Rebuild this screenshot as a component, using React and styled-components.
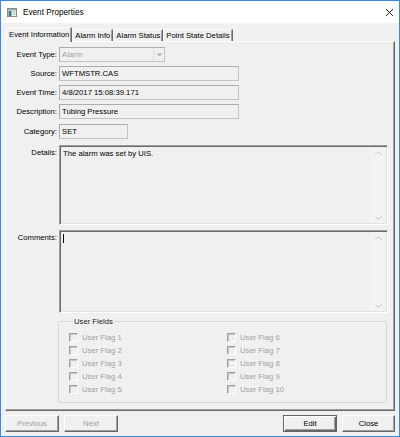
import React from 'react'
import styled, { createGlobalStyle } from 'styled-components'

const GlobalStyle = createGlobalStyle`
  html, body {
    margin: 0;
    padding: 0;
    background: #ffffff;
  }
  * {
    box-sizing: border-box;
  }
`

const Window = styled.div`
  width: 400px;
  height: 437px;
  border: 1px solid #3c8ad8;
  display: flex;
  flex-direction: column;
  font-family: 'Liberation Sans', Arial, sans-serif;
  font-size: 7.7px;
  color: #000;
  overflow: hidden;
`

const TitleBar = styled.div`
  height: 22px;
  flex: none;
  background: #ffffff;
  display: flex;
  align-items: center;
  padding: 0 5px 0 6px;
`

const TitleText = styled.span`
  font-family: 'Liberation Sans', Arial, sans-serif;
  font-size: 8.2px;
  margin-left: 6px;
  flex: 1;
  color: #000;
`

const Body = styled.div`
  flex: 1;
  background: #f0f0f0;
  display: flex;
  flex-direction: column;
  padding: 4px 4px 4px 4px;
`

const TabStrip = styled.div`
  height: 14px;
  display: flex;
  align-items: flex-end;
  padding-left: 1px;
  position: relative;
  z-index: 1;
`

const Tab = styled.div`
  height: ${({ active }) => (active ? '15px' : '12px')};
  margin-bottom: ${({ active }) => (active ? '-1px' : '0')};
  padding: 0 2px 0 2px;
  display: flex;
  align-items: center;
  background: #f0f0f0;
  border-top: 1px solid #ffffff;
  border-left: 1px solid #ffffff;
  border-right: 1px solid #696969;
  box-shadow: inset -1px 0 0 #a0a0a0;
  white-space: nowrap;
  line-height: 1;
`

const Panel = styled.div`
  flex: 1;
  border-top: 1px solid #ffffff;
  border-left: 1px solid #ffffff;
  border-right: 1px solid #696969;
  border-bottom: 1px solid #696969;
  box-shadow: inset -1px -1px 0 #a0a0a0;
  padding: 5px 0 0 1px;
  display: flex;
  flex-direction: column;
`

const Field = styled.div`
  display: flex;
  align-items: ${({ top }) => (top ? 'flex-start' : 'center')};
  margin-top: ${({ gap }) => gap}px;
`

const Label = styled.div`
  width: 50px;
  margin-right: 2px;
  text-align: right;
  white-space: nowrap;
  padding-top: ${({ top }) => (top ? '3px' : '0')};
`

const TextBox = styled.div`
  width: ${({ w }) => w}px;
  height: 15px;
  background: #f0f0f0;
  border: 1px solid #c4c4c4;
  border-top-color: #adadad;
  border-left-color: #adadad;
  padding: 0 2px;
  display: flex;
  align-items: center;
  white-space: nowrap;
  color: ${({ disabled }) => (disabled ? '#a0a0a0' : '#000')};
`

const Combo = styled(TextBox)`
  padding-right: 0;
  justify-content: space-between;
`

const ComboArrow = styled.div`
  width: 11px;
  height: 13px;
  display: flex;
  align-items: center;
  justify-content: center;
  border-left: 1px solid #e3e3e3;
`

const TextArea = styled.div`
  width: 329px;
  height: ${({ h }) => h}px;
  background: #f0f0f0;
  border-top: 1px solid #a0a0a0;
  border-left: 1px solid #a0a0a0;
  border-right: 1px solid #ffffff;
  border-bottom: 1px solid #ffffff;
  box-shadow: inset 1px 1px 0 #696969, inset -1px -1px 0 #e3e3e3;
  display: flex;
`

const AreaText = styled.div`
  flex: 1;
  padding: 3px 2px 0 3px;
  white-space: nowrap;
`

const Caret = styled.div`
  width: 1px;
  height: 9px;
  background: #000;
`

const ScrollBar = styled.div`
  width: 14px;
  margin: 2px 2px 1px 0;
  background: #f3f3f3;
  display: flex;
  flex-direction: column;
  justify-content: space-between;
  align-items: center;
  padding: 3px 0;
`

const GroupBox = styled.fieldset`
  margin: 4px 0 0 -1px;
  width: 329px;
  height: 86px;
  border: 1px solid #d9d9d9;
  border-radius: 2px;
  padding: 5px 0 0 10px;
`

const Legend = styled.legend`
  margin-left: 4px;
  padding: 0 1px;
  font-family: 'Liberation Sans', Arial, sans-serif;
  font-weight: 400;
  font-size: 7.7px;
  line-height: 9px;
  color: #1a1a1a;
`

const FlagGrid = styled.div`
  display: grid;
  grid-template-columns: 158px 1fr;
  grid-auto-flow: column;
  grid-template-rows: repeat(5, 13px);
`

const Flag = styled.div`
  display: flex;
  align-items: center;
  color: #a0a0a0;
  white-space: nowrap;
`

const Box = styled.div`
  width: 9px;
  height: 9px;
  margin-right: 4px;
  border-top: 1px solid #a0a0a0;
  border-left: 1px solid #a0a0a0;
  border-right: 1px solid #ffffff;
  border-bottom: 1px solid #ffffff;
  box-shadow: inset 1px 1px 0 #c8c8c8;
  background: #f0f0f0;
`

const Footer = styled.div`
  height: 17px;
  margin-top: 4px;
  display: flex;
  gap: 5px;
`

const Spacer = styled.div`
  flex: 1;
`

const Button = styled.div`
  width: ${({ w }) => w || 54}px;
  height: 17px;
  display: flex;
  align-items: center;
  justify-content: center;
  background: #f0f0f0;
  color: ${({ disabled }) => (disabled ? '#a0a0a0' : '#000')};
  border-top: 1px solid ${({ focused }) => (focused ? '#646464' : '#ffffff')};
  border-left: 1px solid ${({ focused }) => (focused ? '#646464' : '#ffffff')};
  border-right: 1px solid ${({ focused }) => (focused ? '#646464' : '#696969')};
  border-bottom: 1px solid ${({ focused }) => (focused ? '#646464' : '#696969')};
  box-shadow: ${({ focused }) =>
    focused
      ? 'inset 1px 1px 0 #ffffff, inset -1px -1px 0 #696969, inset -2px -2px 0 #a0a0a0'
      : 'inset -1px -1px 0 #a0a0a0'};
`

const AppIcon = () => (
  <svg width="10" height="9" viewBox="0 0 10 9">
    <rect x="0.5" y="0.5" width="9" height="8" fill="#f4f4f4" stroke="#8a8a8a" />
    <rect x="1" y="1" width="8" height="1.5" fill="#9aa6b2" />
    <rect x="1.5" y="3" width="3" height="5" fill="#3d7f6e" />
    <rect x="5.5" y="3.5" width="3" height="1" fill="#9cb8cc" />
    <rect x="5.5" y="5.5" width="3" height="1" fill="#9cb8cc" />
  </svg>
)

const CloseIcon = () => (
  <svg width="9" height="9" viewBox="0 0 9 9">
    <path d="M1 1 L8 8 M8 1 L1 8" stroke="#111" strokeWidth="0.9" />
  </svg>
)

const Chevron = ({ up }) => (
  <svg width="7" height="4" viewBox="0 0 7 4">
    <path
      d={up ? 'M0.5 3.5 L3.5 0.8 L6.5 3.5' : 'M0.5 0.5 L3.5 3.2 L6.5 0.5'}
      fill="none"
      stroke="#c2c2c2"
      strokeWidth="1"
    />
  </svg>
)

const DownArrow = () => (
  <svg width="7" height="4" viewBox="0 0 7 4">
    <path d="M0.5 0.5 L6.5 0.5 L3.5 3.5 Z" fill="#b4b4b4" />
  </svg>
)

const tabs = ['Event Information', 'Alarm Info', 'Alarm Status', 'Point State Details']

const flags = Array.from({ length: 10 }, (_, i) => `User Flag ${i + 1}`)

export default function App() {
  return (
    <>
      <GlobalStyle />
      <Window>
        <TitleBar>
          <AppIcon />
          <TitleText>Event Properties</TitleText>
          <CloseIcon />
        </TitleBar>
        <Body>
          <TabStrip>
            {tabs.map((t, i) => (
              <Tab key={t} active={i === 0}>
                {t}
              </Tab>
            ))}
          </TabStrip>
          <Panel>
            <Field gap={0}>
              <Label>Event Type:</Label>
              <Combo w={106} disabled>
                Alarm
                <ComboArrow>
                  <DownArrow />
                </ComboArrow>
              </Combo>
            </Field>
            <Field gap={4}>
              <Label>Source:</Label>
              <TextBox w={180}>WFTMSTR.CAS</TextBox>
            </Field>
            <Field gap={4}>
              <Label>Event Time:</Label>
              <TextBox w={180}>4/8/2017 15:08:39.171</TextBox>
            </Field>
            <Field gap={4}>
              <Label>Description:</Label>
              <TextBox w={180}>Tubing Pressure</TextBox>
            </Field>
            <Field gap={5}>
              <Label>Category:</Label>
              <TextBox w={69}>SET</TextBox>
            </Field>
            <Field gap={6} top>
              <Label top>Details:</Label>
              <TextArea h={80}>
                <AreaText>The alarm was set by UIS.</AreaText>
                <ScrollBar>
                  <Chevron up />
                  <Chevron />
                </ScrollBar>
              </TextArea>
            </Field>
            <Field gap={5} top>
              <Label top>Comments:</Label>
              <TextArea h={83}>
                <AreaText>
                  <Caret />
                </AreaText>
                <ScrollBar>
                  <Chevron up />
                  <Chevron />
                </ScrollBar>
              </TextArea>
            </Field>
            <Field gap={0} top>
              <Label />
              <GroupBox>
                <Legend>User Fields</Legend>
                <FlagGrid>
                  {flags.map((f) => (
                    <Flag key={f}>
                      <Box />
                      {f}
                    </Flag>
                  ))}
                </FlagGrid>
              </GroupBox>
            </Field>
          </Panel>
          <Footer>
            <Button disabled>Previous</Button>
            <Button disabled>Next</Button>
            <Spacer />
            <Button focused>Edit</Button>
            <Button w={53}>Close</Button>
          </Footer>
        </Body>
      </Window>
    </>
  )
}
